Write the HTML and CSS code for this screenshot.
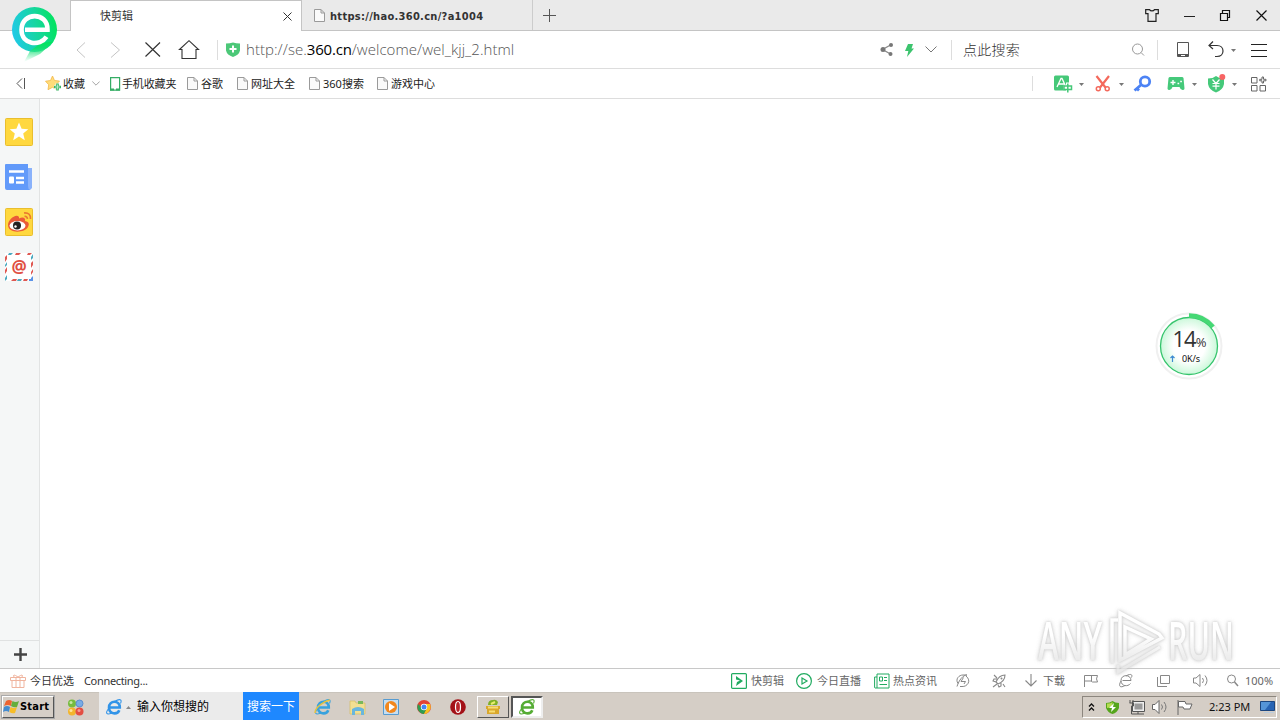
FILE: index.html
```html
<!DOCTYPE html>
<html lang="zh-CN">
<head>
<meta charset="utf-8">
<title>快剪辑</title>
<link rel="stylesheet" href="styles.css">
</head>
<body>
<svg class="defs" width="0" height="0">
  <defs>
    <symbol id="page" viewBox="0 0 11 13"><path d="M.5.5h6.500l3.500 3.500v8.500h-10zM7 .5v3.500h3.500" fill="#fafafa" stroke="#9a9a9a"/></symbol>
    <symbol id="caret" viewBox="0 0 5 3"><path d="M0 0h5L2.500 3z" fill="#777"/></symbol>
    <symbol id="chev" viewBox="0 0 12 7"><path d="M.5.5 6 6 11.500.5" fill="none" stroke="#777"/></symbol>
    <symbol id="e" viewBox="0 0 18 18"><path d="M4.500 9.500h10.300C15 1.800 4 1.800 4 9.500c0 7.200 8.500 7.200 10.300 2.700" fill="none" stroke="currentColor" stroke-width="2.600"/><path d="M4 10c-4 5-3 7.500 3 5M9.500 3.500c5-3 8-2.500 6 2" fill="none" stroke="currentColor" stroke-width="1.100"/></symbol>
  </defs>
</svg>
<div class="browser">
  <header class="tabs">
    <div class="tab tab-active"><span>快剪辑</span><svg width="9" height="9" viewBox="0 0 9 9"><path d="m.5.5 8 8m0-8-8 8" stroke="#333"/></svg></div>
    <div class="tab tab-idle"><svg width="11" height="13"><use href="#page"/></svg><b>https://hao.360.cn/?a1004</b></div>
    <svg class="new-tab" width="13" height="13" viewBox="0 0 13 13"><path d="M6.500 0v13M0 6.500h13" stroke="#555"/></svg>
    <div class="window-buttons">
      <svg width="14" height="13" viewBox="0 0 14 13"><path d="M4.500.6H.7v4H3v7.800h8V4.600h2.300v-4H9.500c-1 1.800-4 1.800-5 0z" fill="none" stroke="#222" stroke-width="1.200"/></svg>
      <svg width="12" height="13" viewBox="0 0 12 13"><path d="M0 7.500h11" stroke="#222"/></svg>
      <svg width="10" height="11" viewBox="0 0 10 11"><path d="M-.5 3.500h7v7h-7zM1.500 3V.5h7v7H7" fill="none" stroke="#111" stroke-width="1.200"/></svg>
      <svg width="11" height="11" viewBox="0 0 11 11"><path d="m.5.5 10 10m0-10-10 10" stroke="#111" stroke-width="1.200"/></svg>
    </div>
  </header>
  <svg class="logo" width="48" height="56" viewBox="0 0 48 56">
    <defs><linearGradient id="lg" x1="0" y1=".6" x2="1" y2=".4"><stop stop-color="#1fc9e8"/><stop offset=".55" stop-color="#17d6a0"/><stop offset="1" stop-color="#00e45c"/></linearGradient>
    <linearGradient id="tail" x1="0" y1="0" x2="0" y2="1"><stop stop-color="#00e45c"/><stop offset=".3" stop-color="#10e070"/><stop offset="1" stop-color="#60eba8" stop-opacity="0"/></linearGradient></defs>
    <circle cx="23.500" cy="23.500" r="22.500" fill="url(#lg)"/>
    <path d="M42.500 35.500 29 48 13 56l6-11 11-8z" fill="url(#tail)"/>
    <path d="M14 23.800h22.500C37 5.500 10.500 5.500 10.500 23.800c0 15 18.500 17 25 7" fill="none" stroke="#fff" stroke-width="4.600"/>
  </svg>
  <nav class="address">
    <svg width="11" height="16" viewBox="0 0 11 16"><path d="M9 .5 1 8l8 7.500" fill="none" stroke="#c4c4c4"/></svg>
    <svg width="11" height="16" viewBox="0 0 11 16"><path d="M1 .5 9.500 8 1 15.500" fill="none" stroke="#c4c4c4"/></svg>
    <svg width="16" height="15" viewBox="0 0 16 15"><path d="m.5.5 14.500 14M15 .5.5 14.500" stroke="#333" stroke-width="1.200"/></svg>
    <svg width="20" height="19" viewBox="0 0 20 19"><path d="M.5 9.500 10 .7l9.500 8.800H17v9H3v-9z" fill="none" stroke="#333" stroke-width="1.100"/></svg>
    <i class="rule"></i>
    <svg width="14" height="15" viewBox="0 0 14 15"><path d="M0 1.500q4 0 7-1 3 1 7 1v7q-1 4.500-7 6.500-6-2-7-6.500z" fill="#4cc878"/><path d="M7 3.500v7M3.500 7h7" stroke="#fff" stroke-width="2"/></svg>
    <span class="url">http://se.<em>360.cn</em>/welcome/wel_kjj_2.html</span>
    <svg width="13" height="13" viewBox="0 0 13 13"><path d="M10.500 2 2.500 6.500l8 4.500" fill="none" stroke="#888" stroke-width="1.300"/><circle cx="11" cy="2" r="2" fill="#777"/><circle cx="3" cy="6.500" r="2.500" fill="#777"/><circle cx="10.500" cy="11" r="2" fill="#777"/></svg>
    <svg width="10" height="14" viewBox="0 0 10 14"><path d="M4 1h5L7.500 5.500H10L3 14l1.300-6H1z" fill="#3cc46e"/></svg>
    <svg width="12" height="7"><use href="#chev"/></svg>
    <i class="rule"></i>
    <span class="hint">点此搜索</span>
    <svg width="15" height="14" viewBox="0 0 15 14"><circle cx="6.500" cy="6" r="5" fill="none" stroke="#999"/><path d="m10 9.500 3 3" stroke="#999"/></svg>
    <i class="rule"></i>
    <svg width="13" height="17" viewBox="0 0 13 17"><path d="M.5 1.500h11v14H.5zM.5 13.500h11" fill="none" stroke="#555"/><path d="M1 14.500h3m4 0h3" stroke="#555" stroke-width="2"/></svg>
    <svg width="17" height="17" viewBox="0 0 17 17"><path d="M5 .5 1 4.500l4 3.500M1.500 4.500H9c8 0 8 11 0 11H7" fill="none" stroke="#333" stroke-width="1.200"/></svg>
    <svg class="low" width="5" height="3"><use href="#caret"/></svg>
    <svg width="16" height="14" viewBox="0 0 16 14"><path d="M0 1.500h16M0 7.500h16M0 13.500h16" stroke="#222"/></svg>
  </nav>
  <nav class="bookmarks">
    <svg width="9" height="11" viewBox="0 0 9 11"><path d="M5 .5 0 5.500l5 5M7.500 0v11" fill="none" stroke="#555"/></svg>
    <svg width="17" height="15" viewBox="0 0 17 15"><path d="m7.500 0 2 4.500 5 .6-3.500 3.600.7 5-4.200-2.400L3 13.700l.7-5L.5 5.200l5-.7z" fill="#ffdc7a" stroke="#f2b747" stroke-width=".8"/><path d="M12.500 7.500v7M9 11h7" stroke="#fff" stroke-width="4"/><path d="M12.500 7.500v7M9 11h7" stroke="#3bb565" stroke-width="2.600"/><path d="M12.500 8.500v5M10 11h5" stroke="#c9f1d6" stroke-width=".8"/></svg>
    <span>收藏</span>
    <svg width="8" height="5"><use href="#chev"/></svg>
    <svg width="11" height="14" viewBox="0 0 11 14"><path d="M.6.600h9v12.500h-9z" fill="#fff" stroke="#35ad65" stroke-width="1.200"/><path d="M0 12.500h4m2 0h4" stroke="#35ad65" stroke-width="2"/></svg>
    <span class="mobile">手机收藏夹</span>
    <svg width="11" height="13"><use href="#page"/></svg><span>谷歌</span>
    <svg width="11" height="13"><use href="#page"/></svg><span>网址大全</span>
    <svg width="11" height="13"><use href="#page"/></svg><span>360搜索</span>
    <svg width="11" height="13"><use href="#page"/></svg><span>游戏中心</span>
    <i class="rule small"></i>
    <svg width="19" height="18" viewBox="0 0 19 18"><rect y=".5" width="15" height="15" rx="1.500" fill="#45c878"/><path d="M3 12 7 3.500h1l4 8.500M4.500 9h6" fill="none" stroke="#fff" stroke-width="1.300"/><path d="M14 7.500v10.500M9.500 12.500h9" stroke="#fff" stroke-width="4"/><path d="M13.800 8.500v9M10 11h7.500v3.500H10z" fill="none" stroke="#45c878" stroke-width="1.500"/></svg>
    <svg class="low" width="5" height="3"><use href="#caret"/></svg>
    <svg width="15" height="16" viewBox="0 0 15 16"><path d="m1.500 0 9 11.500M14 0 5 11.500" stroke="#f4695c" stroke-width="2.200"/><circle cx="3.300" cy="12.800" r="2" fill="none" stroke="#f4695c" stroke-width="1.500"/><circle cx="12.200" cy="12.800" r="2" fill="none" stroke="#f4695c" stroke-width="1.500"/></svg>
    <svg class="low" width="5" height="3"><use href="#caret"/></svg>
    <svg width="17" height="17" viewBox="0 0 17 17"><circle cx="11" cy="6.500" r="4.700" fill="none" stroke="#4c83f5" stroke-width="2.800"/><path d="m7.500 9.500-7 6m2-2.500 2.500 2.500" stroke="#4c83f5" stroke-width="2.800"/></svg>
    <svg width="18" height="14" viewBox="0 0 18 14"><path d="M1.500 1Q2 0 3 0h12q1 0 1.500 1l1 10.500q0 1.500-2 1.500t-3-3h-7q-1 3-3 3t-2-1.500z" fill="#45c97a"/><path d="M6 3v5M3.500 5.500h5M10.500 6.500h1.700m1-2h1.700" stroke="#fff" stroke-width="1.400"/></svg>
    <svg class="low" width="5" height="3"><use href="#caret"/></svg>
    <svg width="18" height="18" viewBox="0 0 18 18"><path d="M0 3.500q5 0 8-2.500 3 2.500 8 2.500V9q-1 6-8 8.500-7-2.500-8-8.500z" fill="#45c97a"/><path d="m4.500 4.500 3.500 4 3.500-4M4.500 8.500h7m-7 2.700h7M8 8.500v6" fill="none" stroke="#fff" stroke-width="1.200"/><circle cx="14.300" cy="2" r="3" fill="#f86464"/></svg>
    <svg class="low" width="5" height="3"><use href="#caret"/></svg>
    <svg width="15" height="15" viewBox="0 0 15 15"><path d="M.5 1.500H6V7H.5zM.5 9.500H6V15H.5zM9 9.500h5.500V15H9zM11 1h1.500v2.300H15v1.500h-2.500V7H11V4.800H8.700V3.300H11z" fill="none" stroke="#666"/></svg>
  </nav>
  <main class="content">
    <aside class="sidebar">
      <svg width="28" height="28" viewBox="0 0 28 28"><rect x=".5" y=".5" width="27" height="27" rx="1" fill="#ffd83f" stroke="#e9be2e"/><path d="m14 4.500 2.600 6.200 6.700.5-5.100 4.400 1.600 6.600-5.800-3.600-5.800 3.600 1.600-6.600-5.100-4.400 6.700-.5z" fill="#fff"/></svg>
      <svg width="28" height="28" viewBox="0 0 28 28"><path d="M22 5h5v20l-2 2h-4z" fill="#8ab2fb"/><path d="M0 2q0-1 1-1h22v22q0 3 2 4H2q-2 0-2-2z" fill="#629afa"/><path d="M4 8.500h15M11 15h8m-8 4.500h8" stroke="#fff" stroke-width="2.500"/><rect x="4" y="13.500" width="5" height="7" rx="1" fill="#fff"/></svg>
      <svg width="28" height="28" viewBox="0 0 28 28"><rect x=".5" y=".5" width="27" height="27" rx="1" fill="#ffd83f" stroke="#e9be2e"/><path d="M3 17c0-5 8-12 11-8v1.500c4-2 7-.5 6 2.500 5 1 4 4 3 6-3 6-20 7-20-2z" fill="#ea5b38"/><ellipse cx="12.500" cy="17.800" rx="8" ry="4.700" fill="#fff"/><circle cx="12" cy="17.500" r="4" fill="#222"/><circle cx="10.500" cy="18.500" r="1.200" fill="#fff"/><path d="M19.500 8.500q2.500-.5 3 2.500M19 5q7-.5 6.500 6" fill="none" stroke="#ea7a30" stroke-width="1.700"/></svg>
      <svg width="28" height="28" viewBox="0 0 28 28"><rect width="28" height="28" fill="#fff"/><path d="M11 0h5l-2 2h-4zM26 10l2-2v4l-2 3zM6 28h5l1-2H8zM23 0h4l-2 2h-3zM0 4l2-2v4L0 9zM0 17l2-3v4l-2 3zM26 19l2-3v3l-2 3zM18 28h4l1-2h-4z" fill="#df5851"/><path d="M4 0h4L6 2H3zM0 12l2-3v3l-2 2zM0 25l2-3v4l-2 2zM12 28h4l1-2h-4zM26 4l2-3v4l-2 2z" fill="#4aa9c0"/><path d="M24 28h4v-5l-2 2v1h-2z" fill="#5a93e8"/><text x="14" y="19.500" text-anchor="middle" class="at">@</text></svg>
      <div class="add"><svg width="13" height="13" viewBox="0 0 13 13"><path d="M6.500 0v13M0 6.500h13" stroke="#444" stroke-width="2.400"/></svg></div>
    </aside>
    <section class="viewport"></section>
  </main>
  <div class="speed">
    <svg class="speed-ring" width="68" height="68" viewBox="0 0 68 68"><defs><radialGradient id="sp"><stop offset=".55" stop-color="#fff"/><stop offset="1" stop-color="#cbf8da"/></radialGradient></defs><circle cx="34" cy="34" r="32.500" fill="#fff" stroke="#f0f0f0" stroke-width="2"/><circle cx="34" cy="34" r="28.500" fill="url(#sp)" stroke="#35c46c" stroke-width="1.300"/><path d="M34 3.500A30.500 30.500 0 0 1 58 15" fill="none" stroke="#45d874" stroke-width="4.500"/></svg>
    <div class="percent"><span>14</span><small>%</small></div>
    <div class="rate"><svg width="5" height="7" viewBox="0 0 5 7"><path d="M2.500 7V1M.5 3l2-2 2 2" fill="none" stroke="#3d8ad2" stroke-width="1.200"/></svg><span>0K/s</span></div>
  </div>
  <svg class="watermark" width="204" height="72" viewBox="0 0 204 72">
    <defs><linearGradient id="wm" gradientUnits="userSpaceOnUse" x1="0" y1="12" x2="0" y2="55"><stop offset=".35" stop-color="#fff"/><stop offset="1" stop-color="#e4e4e4"/></linearGradient></defs>
    <g class="mark"><text x="4" y="51.500" textLength="64" lengthAdjust="spacingAndGlyphs">ANY</text><text x="134" y="51.500" textLength="66" lengthAdjust="spacingAndGlyphs">RUN</text>
    <path d="M78 55V12h6M86 5v47l42-22-3-4L86 5zm5 14v28l26-16z" fill="none" stroke="url(#wm)" stroke-width="3.500"/><path d="M84 57v7l42-25" fill="none" stroke="url(#wm)" stroke-width="3"/></g>
  </svg>
  <footer class="status">
    <svg width="16" height="14" viewBox="0 0 16 14"><path d="M.5 3.500h15v3H.5zM2 6.500v7h12v-7M6 3.500v10m4-10v10M8 3Q2-1 4 3m4 0q6-4 4 0" fill="none" stroke="#f0b49e"/></svg>
    <span class="dark">今日优选</span><span class="dark connecting">Connecting...</span>
    <svg width="16" height="16" viewBox="0 0 16 16"><rect x=".6" y=".6" width="14.800" height="14.800" rx="1" fill="none" stroke="#21ab60" stroke-width="1.200"/><path d="m5 3 7 5-7 5 1-4 3-1.500L5 6.500z" fill="#21ab60"/></svg><span>快剪辑</span>
    <svg width="16" height="16" viewBox="0 0 16 16"><circle cx="8" cy="8" r="7.400" fill="none" stroke="#21ab60" stroke-width="1.200"/><path d="m6 5 5 3-5 3z" fill="none" stroke="#21ab60" stroke-width="1.200"/></svg><span>今日直播</span>
    <svg width="16" height="16" viewBox="0 0 16 16"><path d="M3 1h12v14H1q-.4 0-.4-1V4H3zM3 4v11M5.500 4h3v4h-3zM10 4.500h3M10 7.500h3M5.500 11.500H13" fill="none" stroke="#21ab60"/></svg><span>热点资讯</span>
    <svg width="14" height="14" viewBox="0 0 14 14"><path d="M2 9.500C-1 5 3 1 7 1h4C7 1 3 6 1 12.500M10 2c6 5 1 11-4 10.500H4M7.500 3.500 5 7.500h4.500L8 10" fill="none" stroke="#888"/></svg>
    <svg width="14" height="14" viewBox="0 0 14 14"><path d="M4 8Q7 1 13 1q0 6-7 9zM5 5H2L1 7l3 1m2 3 1 2 2-1V9M2 1l3 3m6 6 2 3M1 13l4-3" fill="none" stroke="#888" stroke-width="1.100"/><circle cx="9.500" cy="4.500" r="1" fill="#888"/></svg>
    <svg width="12" height="13" viewBox="0 0 12 13"><path d="M6 0v12M.5 6.500 6 12l5.500-5.500" fill="none" stroke="#888" stroke-width="1.100"/></svg><span>下载</span>
    <svg width="14" height="12" viewBox="0 0 14 12"><path d="M.5 12V.5h13q-2 3.500 0 6.500H8.500L7 6H.5M7.500.5V6" fill="none" stroke="#888"/></svg>
    <svg width="14" height="14" viewBox="0 0 14 14"><path d="M3.500 6.500H12c0-6.500-10-6.500-10 0 0 6 7 6.500 9.500 3M2 7c-3 5-1 7.500 4 4.500M7 2c4-2.500 7-2 5.500 1.500" fill="none" stroke="#888"/></svg>
    <svg width="13" height="12" viewBox="0 0 13 12"><path d="M3.500.5h9v8h-9zM.5 2v9.500H10" fill="none" stroke="#888"/></svg>
    <svg width="15" height="13" viewBox="0 0 15 13"><path d="M.5 4v5h2.500L7 12.500V.5L3 4zM9.500 4q2 2.500 0 5M12 1.500q4 5 0 10" fill="none" stroke="#888"/></svg>
    <svg width="12" height="13" viewBox="0 0 12 13"><circle cx="4.500" cy="5" r="4" fill="none" stroke="#888"/><path d="m7.500 8 3.500 4" stroke="#888" stroke-width="1.500"/></svg><span>100%</span>
  </footer>
</div>
<div class="taskbar">
  <div class="start"><svg width="17" height="16" viewBox="0 0 17 16"><path d="M3 2q3-2 6 0L8 7Q5 5 1 7z" fill="#ed6331"/><path d="M9.500 2q3 2 6.500 0l-2 6q-3 1-6-1z" fill="#65ae3c"/><path d="M1 8q3-2 6 0l-1 5q-3-2-6 0z" fill="#438bd0"/><path d="M7.500 8q3 2 6.500 0l-2 6q-3 1-5.500-1z" fill="#f7bd27"/></svg><b>Start</b></div>
  <div class="quick"><svg width="18" height="18" viewBox="0 0 18 18"><circle cx="5" cy="4.500" r="4" fill="#76bc3f"/><circle cx="12.500" cy="4.500" r="3.500" fill="#79ace4" stroke="#5b8dd0"/><circle cx="5" cy="12.500" r="4" fill="#f3b52b"/><circle cx="12.500" cy="12.500" r="4" fill="#e34e42"/><circle cx="4" cy="3.500" r="1.500" fill="#c6e6a5"/><circle cx="4" cy="11.500" r="1.500" fill="#ffe19a"/><circle cx="12" cy="11.500" r="1.500" fill="#f49b92"/></svg></div>
  <div class="search"><svg class="blue" width="18" height="18"><use href="#e"/></svg><svg width="5" height="3" viewBox="0 0 5 3"><path d="M0 3h5L2.500 0z" fill="#888"/></svg><span>输入你想搜的</span></div>
  <div class="go">搜索一下</div>
  <div class="apps">
    <svg class="lightblue" width="18" height="18" viewBox="0 0 18 18"><use href="#e"/><path d="M1 15q0-4 5-8t10-5" fill="none" stroke="#e4c33f" stroke-width="1.500"/></svg>
    <svg width="18" height="18" viewBox="0 0 18 18"><path d="M1 3h5l1 2h9v11H1z" fill="#f2df91" stroke="#d7bd62" stroke-width=".7"/><path d="M9 3h5v3H9z" fill="#79b95b"/><path d="M3 17v-6q6-4 12 0v6h-3v-4H6v4z" fill="#69b6dd"/></svg>
    <svg width="16" height="16" viewBox="0 0 16 16"><path d="M.5.5h15v15H.5z" fill="#c7def0" stroke="#579bd0"/><circle cx="8" cy="8" r="6" fill="#f2871d"/><path d="m6 4 6 4-6 4z" fill="#fff"/></svg>
    <svg width="14" height="14" viewBox="0 0 14 14"><circle cx="7" cy="7" r="7" fill="#e34133"/><path d="M1 4a7 7 0 0 0 6 10l3-6-3 2z" fill="#2d9d51"/><path d="M7 14A7 7 0 0 0 13 4H7l3 4z" fill="#f6c51f"/><circle cx="7" cy="7" r="3.200" fill="#fff"/><circle cx="7" cy="7" r="2.500" fill="#4285f4"/></svg>
    <svg width="16" height="16" viewBox="0 0 16 16"><circle cx="8" cy="8" r="7.800" fill="#a31117"/><ellipse cx="8" cy="8" rx="2.500" ry="5.500" fill="#b9242a" stroke="#fff" stroke-width="1.200"/></svg>
    <div class="app"><svg width="16" height="16" viewBox="0 0 16 16"><path d="M1 7h14v3H1zM2 10h12v5H2z" fill="#d9a72b"/><path d="M3 8.500h10M4 12.500h6" stroke="#f7dd72" stroke-width="2"/><path d="M3 6q0-5 5-5 3-1 5 2l-1 3z" fill="#7eaf24"/><path d="m6 5 4-2" stroke="#e8ed6f" stroke-width="2"/></svg></div>
    <div class="app pressed"><svg class="green" width="18" height="18"><use href="#e"/></svg></div>
  </div>
  <div class="tray">
    <svg width="7" height="9" viewBox="0 0 7 9"><path d="m1 3.500 2.500-2.500L6 3.500M1 7.500l2.500-2.500L6 7.500" fill="none" stroke="#111" stroke-width="1.300"/></svg>
    <svg width="13" height="13" viewBox="0 0 13 13"><path d="M0 2q4 0 6.500-2Q9 2 13 2v5q-2 5-6.500 6Q2 12 0 7z" fill="#55a51c"/><path d="M1 2.500Q4 3 6.500 1v5L1 7z" fill="#b5dc52"/><path d="M8 2 3 7h3l-1 4 5-5H7z" fill="#fff"/></svg>
    <svg width="16" height="15" viewBox="0 0 16 15"><path d="M4.500 2.500h10v8h-10z" fill="#999" stroke="#eee" stroke-width="2"/><path d="M3.500 1.500h12v10h-12zM7 14h8M9 12v2M1 0v3m3-3v3M.5 3h4v3h-2v8H7" fill="none" stroke="#555"/></svg>
    <svg width="16" height="14" viewBox="0 0 16 14"><path d="M.5 4.500v5h2.500L7 13.500V.5L3 4.500z" fill="#fff" stroke="#666"/><path d="M9.500 4.500q2 2.500 0 5M12 2q4 5 0 10" fill="none" stroke="#777"/></svg>
    <svg width="16" height="15" viewBox="0 0 16 15"><path d="M1 15V0M1.500 1.500H8L9 4h6l-2 5H7L6 7H1.500z" fill="#fff" stroke="#666"/></svg>
    <span>2:23 PM</span>
    <svg width="16" height="12" viewBox="0 0 16 12"><path d="M.5.5h14v9H.5z" fill="#2864b4" stroke="#1c467f"/><path d="M1 1h10L5 9H1z" fill="#5595d8"/><path d="M4 11.500h10" stroke="#bcd"/></svg>
  </div>
</div>
</body>
</html>
```
FILE: styles.css
```css
* { box-sizing: border-box; }
body { margin: 0; width: 1280px; height: 720px; overflow: hidden; background: #fff; color: #333; font: 11px/14px "Noto Sans", "Noto Sans CJK SC", sans-serif; display: flex; flex-direction: column; }
svg { display: block; flex: none; overflow: visible; }
span, b { white-space: nowrap; }
.defs { position: absolute; }
.browser { position: relative; height: 692px; display: flex; flex-direction: column; }
.tabs { height: 31px; flex: none; background: #eaeaea; border-bottom: 1px solid #c4c4c4; display: flex; padding-left: 70px; }
.tab { display: flex; align-items: center; }
.tab-active { height: 31px; width: 232px; background: #fff; border: 1px solid #c4c4c4; border-bottom: 0; justify-content: space-between; padding: 0 9px 0 29px; }
.tab-idle { width: 231px; border-right: 1px solid #ccc; padding-left: 12px; gap: 5px; }
.tab-idle b { font: bold 11px/14px "DejaVu Sans Condensed", "DejaVu Sans", sans-serif; font-stretch: condensed; letter-spacing: .3px; margin-top: 3px; }
.new-tab { margin: 9px 0 0 10px; }
.window-buttons { margin: 0 13px 0 auto; display: flex; align-items: center; justify-content: space-between; width: 122px; }
.logo { position: absolute; left: 11px; top: 6px; }
.address, .bookmarks, .status { display: grid; align-items: center; flex: none; }
.address { height: 38px; border-bottom: 1px solid #ddd; padding-left: 76px; grid-template-columns: 34px 35px 34px 38px 9px 20px 634px 24px 21px 26px 12px 168px 26px 20px 31px 23px 20px 16px; }
.rule { width: 1px; height: 20px; background: #ddd; }
.rule.small { height: 15px; }
.low { margin-top: 2px; }
.url { font: 300 15px/20px "Open Sans", sans-serif; color: #555; letter-spacing: .04px; margin-top: -1px; }
.url em { color: #000; font-style: normal; font-weight: 400; letter-spacing: -.2px; }
.hint { font-size: 14px; line-height: 20px; font-weight: 300; letter-spacing: .25px; }
.bookmarks { height: 30px; border-bottom: 1px solid #ddd; padding-left: 17px; color: #222; grid-template-columns: 28px 18px 29px 18px 12px 65px 14px 36px 14px 58px 14px 54px 14px 641px 22px 25px 16px 24px 15px 33px 25px 16px 24px 19px 15px; }
.mobile { letter-spacing: -.15px; }
.content { flex: 1; display: flex; }
.sidebar { width: 40px; background: #f5f7f7; border-right: 1px solid #e2e4e4; display: flex; flex-direction: column; align-items: flex-start; gap: 17px; padding-top: 19px; }
.sidebar > svg { margin-left: 5px; }
.add { margin-top: auto; width: 39px; height: 28px; border-top: 1px solid #e0e2e2; padding: 7px 0 0 14px; }
.at { font: bold 17px "Open Sans", sans-serif; fill: #e04f43; }
.viewport { flex: 1; background: #fff; }
.status { height: 24px; border-top: 1px solid #c8c8c8; padding-left: 10px; color: #666; grid-template-columns: 20px 54px 647px 20px 45px 21px 57px 19px 63px 36px 33px 18px 41px 35px 38px 36px 34px 18px 35px; }
.dark { color: #333; }
.connecting { letter-spacing: -.33px; }
.speed { position: absolute; left: 1155px; top: 312px; width: 68px; height: 68px; display: flex; flex-direction: column; align-items: center; padding-top: 14px; }
.speed-ring { position: absolute; left: 0; top: 0; }
.percent, .rate { position: relative; display: flex; align-items: baseline; color: #333; }
.percent { font: 22px/24px "Open Sans", sans-serif; letter-spacing: -1px; height: 24px; }
.percent small { font-size: 13px; }
.rate { gap: 7px; font-size: 9px; line-height: 10px; letter-spacing: -.1px; color: #111; margin: 4px 8px 0 0; }
.watermark { position: absolute; left: 1034px; top: 608px; z-index: 2; opacity: .8; }
.mark { filter: drop-shadow(0 0 1px #c4c4c4) drop-shadow(0 0 2px #ccc); }
.mark text { font: 600 52px "Open Sans", sans-serif; fill: url(#wm); }
.taskbar { height: 28px; background: #d5cec6; display: flex; align-items: stretch; border-top: 1px solid #c9c4bc; }
.start { width: 52px; height: 22px; margin: 3px 0 0 2px; border: 1px solid; border-color: #fff #555 #555 #fff; box-shadow: 0 0 0 1px #aaa; display: flex; align-items: center; color: #000; }
.start b { font: bold 11px/14px "DejaVu Sans Condensed", "DejaVu Sans", sans-serif; font-stretch: condensed; letter-spacing: .2px; }
.quick { width: 45px; padding: 6px 0 0 13px; }
.search { width: 144px; margin-top: -1px; background: #ebebeb; display: flex; align-items: center; gap: 3px; padding: 2px 0 0 6px; font-size: 12px; color: #000; }
.search span { margin-left: 3px; }
.blue { color: #3294e8; }
.lightblue { color: #38a2dd; }
.green { color: #55ac34; }
.go { width: 56px; margin-top: -1px; background: #1e88ff; color: #fff; font-size: 12px; line-height: 29px; text-align: center; }
.apps { display: grid; grid-template-columns: 35px 34px 34px 33px 27px 34px 32px; align-items: center; padding-left: 15px; }
.app { width: 32px; height: 22px; border: 1px solid; border-color: #fff #555 #555 #fff; display: flex; align-items: center; justify-content: center; }
.app.pressed { background: #fff; border: 2px solid; border-color: #555 #eee #eee #555; }
.tray { width: 195px; height: 22px; margin: 3px 3px 0 auto; border: 1px solid; border-color: #8c867e #fff #fff #8c867e; display: grid; align-items: center; padding-left: 5px; grid-template-columns: 18px 23px 23px 25px 32px 51px 16px; color: #111; }
```
